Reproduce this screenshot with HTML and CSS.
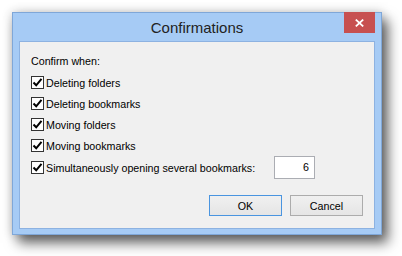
FILE: index.html
```html
<!DOCTYPE html>
<html lang="en">

<head>
    <meta charset="UTF-8">
    <meta name="viewport" content="width=device-width, initial-scale=1.0">
    <title>Confirmations</title>
    <link rel="stylesheet" href="styles.css">
</head>

<body>
    <div class="window">
        <div class="titlebar">
            <span class="title">Confirmations</span>
            <button class="close" aria-label="Close">
                <svg width="9" height="8" viewBox="0 0 9 8">
                    <path d="M0.8 0.6 L8.2 7.4 M8.2 0.6 L0.8 7.4" stroke="#fff" stroke-width="1.8" fill="none" />
                </svg>
            </button>
        </div>

        <div class="client">
            <p class="caption">Confirm when:</p>
            <ul class="options">
                <li class="option"><span class="check"><svg width="11" height="11" viewBox="0 0 11 11"><path d="M1.5 5.5 L4.2 8.3 L9.5 1.8" stroke="#000" stroke-width="2" fill="none" /></svg></span>Deleting folders</li>
                <li class="option"><span class="check"><svg width="11" height="11" viewBox="0 0 11 11"><path d="M1.5 5.5 L4.2 8.3 L9.5 1.8" stroke="#000" stroke-width="2" fill="none" /></svg></span>Deleting bookmarks</li>
                <li class="option"><span class="check"><svg width="11" height="11" viewBox="0 0 11 11"><path d="M1.5 5.5 L4.2 8.3 L9.5 1.8" stroke="#000" stroke-width="2" fill="none" /></svg></span>Moving folders</li>
                <li class="option"><span class="check"><svg width="11" height="11" viewBox="0 0 11 11"><path d="M1.5 5.5 L4.2 8.3 L9.5 1.8" stroke="#000" stroke-width="2" fill="none" /></svg></span>Moving bookmarks</li>
                <li class="option option-count">
                    <span class="check"><svg width="11" height="11" viewBox="0 0 11 11"><path d="M1.5 5.5 L4.2 8.3 L9.5 1.8" stroke="#000" stroke-width="2" fill="none" /></svg></span>
                    <span class="label">Simultaneously opening several bookmarks:</span>
                    <span class="count">6</span>
                </li>
            </ul>
            <div class="actions">
                <button class="btn btn-default">OK</button>
                <button class="btn">Cancel</button>
            </div>
        </div>
    </div>
</body>

</html>
```

FILE: styles.css
```css
/* Page */
html,
body {
    background-color: #fff;
}

body {
    margin: 0;
    padding: 12px 0 21px 12px;
    min-height: 256px;
    box-sizing: border-box;
    font-family: 'Liberation Sans', Arial, sans-serif;
    color: #000;
}

/* Window frame */
.window {
    box-sizing: border-box;
    width: 370px;
    height: 223px;
    padding: 0 6px 5px;
    display: flex;
    flex-direction: column;
    background-color: #a6cbf5;
    border: 1px solid #7fa7d8;
    box-shadow: 6px 8px 12px rgba(0, 0, 0, 0.6), 0 0 10px rgba(0, 0, 0, 0.2);
}

.titlebar {
    position: relative;
    height: 28px;
    display: flex;
    align-items: center;
    justify-content: center;
}

.title {
    font-size: 15px;
    color: #222;
}

.close {
    position: absolute;
    top: -1px;
    right: 0;
    width: 31px;
    height: 21px;
    padding: 0;
    border: none;
    background-color: #c75050;
    display: flex;
    align-items: center;
    justify-content: center;
}

/* Client area */
.client {
    flex: 1;
    display: flex;
    flex-direction: column;
    padding: 12px 11px;
    background-color: #f0f0f0;
    border: 1px solid #8db2e1;
}

.caption {
    margin: 0;
    font-size: 10.7px;
    line-height: 14px;
}

.options {
    list-style: none;
    margin: 4px 0 0;
    padding: 0;
}

.option {
    height: 21px;
    display: flex;
    align-items: center;
    gap: 2px;
    font-size: 10.7px;
}

.check {
    box-sizing: border-box;
    width: 13px;
    height: 13px;
    flex: 0 0 13px;
    display: flex;
    align-items: center;
    justify-content: center;
    background-color: #fff;
    border: 1px solid #333;
}

.option-count {
    margin-top: 1px;
}

.option-count .label {
    flex: 0 0 226px;
}

.count {
    box-sizing: border-box;
    width: 41px;
    height: 23px;
    line-height: 21px;
    padding-right: 5px;
    text-align: right;
    background-color: #fff;
    border: 1px solid #abadb3;
}

/* Buttons */
.actions {
    margin-top: auto;
    display: flex;
    justify-content: flex-end;
    gap: 8px;
}

.btn {
    width: 73px;
    height: 21px;
    padding: 0;
    font-family: 'Liberation Sans', Arial, sans-serif;
    font-size: 10.7px;
    color: #000;
    background: linear-gradient(#f0f0f0, #e5e5e5);
    border: 1px solid #acacac;
}

.btn-default {
    border-color: #4a95e0;
}
```
